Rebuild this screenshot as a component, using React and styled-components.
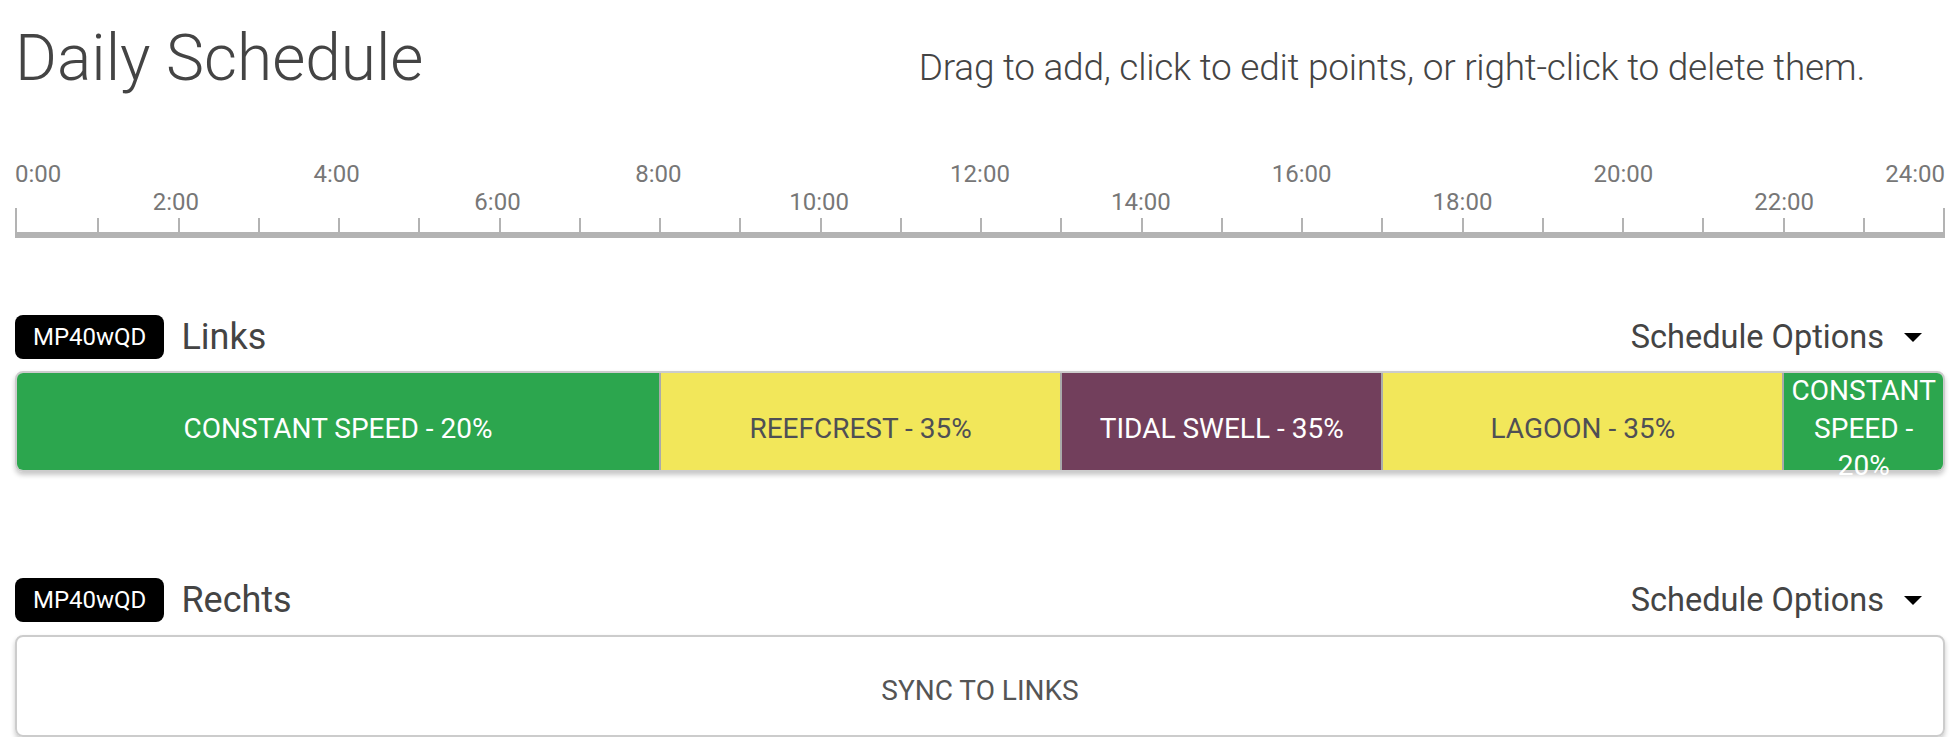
import React from "react";
import styled, { createGlobalStyle } from "styled-components";

const GlobalStyle = createGlobalStyle`
  body {
    margin: 0;
    background: #fff;
    font-family: Roboto, "Liberation Sans", sans-serif;
  }
`;

const Page = styled.div`
  padding: 21px 14px 0 15px;
`;

const Header = styled.div`
  display: flex;
  align-items: baseline;
  justify-content: space-between;
`;

const Title = styled.h1`
  margin: 0;
  font-size: 64px;
  font-weight: 300;
  line-height: 75px;
  color: #444;
`;

const Hint = styled.div`
  margin-right: 80px;
  font-size: 37px;
  font-weight: 300;
  letter-spacing: -0.25px;
  color: #444;
`;

const Timeline = styled.div`
  margin-top: 64px;
`;

const LabelRow = styled.div`
  display: grid;
  grid-template-columns: repeat(24, 1fr);
  font-size: 24px;
  line-height: 28px;
  color: #777;
`;

const Label = styled.span`
  grid-column: ${(p) => p.$from} / ${(p) => p.$to};
  justify-self: ${(p) => p.$align};
  text-align: center;
`;

const TickRow = styled.div`
  display: grid;
  grid-template-columns: repeat(24, 1fr);
  align-items: end;
  box-sizing: border-box;
  height: 24px;
  margin-top: -8px;
  border-left: 2px solid #b3b3b3;
  border-right: 2px solid #b3b3b3;
`;

const Tick = styled.div`
  height: 14px;
  border-left: 2px solid #b3b3b3;
  &:first-child {
    border-left: none;
  }
`;

const Axis = styled.div`
  height: 6px;
  background: #b3b3b3;
`;

const Section = styled.section`
  margin-top: ${(p) => p.$gap}px;
`;

const SectionHeader = styled.div`
  display: flex;
  align-items: center;
  height: 44px;
`;

const Badge = styled.div`
  display: flex;
  align-items: center;
  height: 44px;
  padding: 0 18px;
  border-radius: 8px;
  background: #000;
  color: #fff;
  font-size: 24px;
`;

const Name = styled.div`
  margin-left: 17px;
  font-size: 36px;
  color: #444;
`;

const Options = styled.div`
  display: flex;
  align-items: center;
  gap: 20px;
  margin-left: auto;
  margin-right: 23px;
  font-size: 32.5px;
  color: #444;
`;

const Caret = styled.span`
  width: 0;
  height: 0;
  border-left: 9px solid transparent;
  border-right: 9px solid transparent;
  border-top: 9px solid #000;
`;

const Bar = styled.div`
  display: flex;
  box-sizing: border-box;
  height: 101px;
  margin-top: 12px;
  border: 2px solid #ccc;
  border-radius: 8px;
  box-shadow: 0 3px 5px rgba(0, 0, 0, 0.22);
`;

const Segment = styled.div`
  flex: 0 0 ${(p) => (p.$hours / 24) * 100}%;
  box-sizing: border-box;
  min-width: 0;
  display: flex;
  align-items: center;
  justify-content: center;
  padding: 14px 4px 0;
  border-left: 2px solid #aaa;
  background: ${(p) => p.$bg};
  color: ${(p) => p.$fg};
  font-size: 28px;
  line-height: 1.35;
  text-align: center;
  text-transform: uppercase;
  &:first-child {
    border-left: none;
    border-radius: 6px 0 0 6px;
  }
  &:last-child {
    border-radius: 0 6px 6px 0;
  }
`;

const SyncBox = styled.div`
  display: flex;
  align-items: center;
  justify-content: center;
  box-sizing: border-box;
  height: 102px;
  margin-top: 13px;
  padding-top: 8px;
  border: 2px solid #ccc;
  border-radius: 8px;
  box-shadow: 0 3px 5px rgba(0, 0, 0, 0.22);
  font-size: 28px;
  text-transform: uppercase;
  color: #555;
`;

const GREEN = { bg: "#2ca64e", fg: "#fff" };
const YELLOW = { bg: "#f2e75a", fg: "#4f4f55" };
const PURPLE = { bg: "#723f5c", fg: "#fff" };

const schedule = [
  { name: "Constant Speed", level: 20, from: 0, to: 8, ...GREEN },
  { name: "Reefcrest", level: 35, from: 8, to: 13, ...YELLOW },
  { name: "Tidal Swell", level: 35, from: 13, to: 17, ...PURPLE },
  { name: "Lagoon", level: 35, from: 17, to: 22, ...YELLOW },
  { name: "Constant Speed", level: 20, from: 22, to: 24, ...GREEN },
];

const hourLabel = (h) => {
  if (h === 0) return <Label key={h} $from={1} $to={2} $align="start">0:00</Label>;
  if (h === 24) return <Label key={h} $from={24} $to={25} $align="end">24:00</Label>;
  return (
    <Label key={h} $from={h} $to={h + 2} $align="center">
      {h}:00
    </Label>
  );
};

const PumpHeader = ({ name }) => (
  <SectionHeader>
    <Badge>MP40wQD</Badge>
    <Name>{name}</Name>
    <Options>
      Schedule Options
      <Caret />
    </Options>
  </SectionHeader>
);

export default function App() {
  return (
    <Page>
      <GlobalStyle />
      <Header>
        <Title>Daily Schedule</Title>
        <Hint>Drag to add, click to edit points, or right-click to delete them.</Hint>
      </Header>

      <Timeline>
        <LabelRow>{[0, 4, 8, 12, 16, 20, 24].map(hourLabel)}</LabelRow>
        <LabelRow>{[2, 6, 10, 14, 18, 22].map(hourLabel)}</LabelRow>
        <TickRow>
          {Array.from({ length: 24 }, (_, i) => (
            <Tick key={i} />
          ))}
        </TickRow>
        <Axis />
      </Timeline>

      <Section $gap={77}>
        <PumpHeader name="Links" />
        <Bar>
          {schedule.map((s, i) => (
            <Segment key={i} $hours={s.to - s.from} $bg={s.bg} $fg={s.fg}>
              {s.name} - {s.level}%
            </Segment>
          ))}
        </Bar>
      </Section>

      <Section $gap={106}>
        <PumpHeader name="Rechts" />
        <SyncBox>Sync to Links</SyncBox>
      </Section>
    </Page>
  );
}
